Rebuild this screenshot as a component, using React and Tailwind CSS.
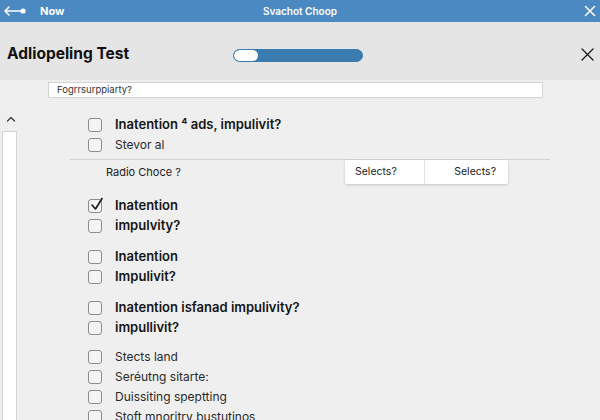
import React from "react";

function Box({ checked }) {
    return (
        <span className="relative w-[14px] h-[14px] rounded-[3px] border border-[#8c8c8c] bg-[#f4f4f4] shrink-0">
            {checked && (
                <svg className="absolute -top-[3px] left-[1px]" width="14" height="14" viewBox="0 0 14 14" fill="none">
                    <path d="M2 8 L5.5 12 L12 1.5" stroke="#1a1a1a" strokeWidth="1.6" strokeLinecap="round" strokeLinejoin="round" />
                </svg>
            )}
        </span>
    );
}

function Row({ label, bold, checked, h = "h-[20px]" }) {
    return (
        <div className={`flex items-center pl-[18px] ${h}`}>
            <Box checked={checked} />
            <span className={bold ? "ml-[13px] text-[13px] font-semibold text-[#151515]" : "ml-[13px] text-[12px] text-[#2a2a2a]"}>
                {label}
            </span>
        </div>
    );
}

export default function App() {
    return (
        <div className="w-[600px] h-[420px] overflow-hidden bg-[#efefef] font-['Inter',sans-serif]">
            {/* top bar */}
            <div className="relative h-[22px] bg-[#4a89c2] flex items-center text-white">
                <svg className="ml-[3px]" width="24" height="12" viewBox="0 0 24 12" fill="none">
                    <path d="M2 6 H20 M6 2 L2 6 L6 10" stroke="white" strokeWidth="1.6" strokeLinecap="round" strokeLinejoin="round" />
                    <circle cx="20" cy="6" r="2.6" fill="white" />
                </svg>
                <span className="ml-[13px] text-[11px] font-bold">Now</span>
                <span className="absolute left-0 right-0 text-center text-[10px] font-semibold pointer-events-none">Svachot Choop</span>
                <svg className="ml-auto mr-[4px]" width="12" height="12" viewBox="0 0 12 12" fill="none">
                    <path d="M1.5 1.5 L10.5 10.5 M10.5 1.5 L1.5 10.5" stroke="white" strokeWidth="1.5" strokeLinecap="round" />
                </svg>
            </div>

            {/* header */}
            <div className="h-[58px] pt-[6px] bg-[#e5e5e5] flex items-center">
                <h1 className="ml-[7px] w-[226px] text-[15.5px] font-bold text-[#111]">Adliopeling Test</h1>
                <div className="mt-[2px] w-[130px] h-[13px] rounded-full border border-[#3a7bb0] bg-[#3a7bb0] overflow-hidden flex">
                    <div className="w-[24px] h-full bg-white rounded-full" />
                </div>
                <svg className="ml-auto mr-[6px]" width="13" height="13" viewBox="0 0 13 13" fill="none">
                    <path d="M1 1 L12 12 M12 1 L1 12" stroke="#1a1a1a" strokeWidth="1.3" strokeLinecap="round" />
                </svg>
            </div>

            {/* body */}
            <div className="pt-[2px]">
                <div className="ml-[48px] w-[495px] h-[16px] bg-white border border-[#d2d2d2] flex items-center pl-[8px] text-[9.5px] text-[#333]">
                    Fogrrsurppiarty?
                </div>

                <div className="flex">
                    <div className="w-[70px] shrink-0 pl-[2px]">
                        <svg className="mt-[17px] ml-[4px]" width="10" height="8" viewBox="0 0 10 8" fill="none">
                            <path d="M1.5 6 L5 2.5 L8.5 6" stroke="#333" strokeWidth="1.2" strokeLinecap="round" strokeLinejoin="round" />
                        </svg>
                        <div className="mt-[8px] w-[15px] h-[300px] bg-white border border-[#d4d4d4]" />
                    </div>

                    <div className="flex-1 pt-[17px]">
                        <Row label="Inatention ⁴ ads, impulivit?" bold />
                        <Row label="Stevor al" />
                        <div className="mt-[4px] w-[480px] h-px bg-[#d3d3d3]" />
                        <div className="relative h-[24px] flex items-center pl-[36px] text-[11px] text-[#222]">
                            Radio Choce ?
                            <div className="absolute left-[275px] top-0 w-[163px] h-[24px] bg-white rounded-[2px] shadow-[0_1px_3px_rgba(0,0,0,0.18)] flex text-[10.5px] text-[#222]">
                                <div className="w-[80px] border-r border-[#e2e2e2] flex items-center pl-[10px]">Selects?</div>
                                <div className="flex-1 flex items-center justify-end pr-[12px]">Selects?</div>
                            </div>
                        </div>

                        <div className="mt-[12px]">
                            <Row label="Inatention" bold checked />
                            <Row label="impulvity?" bold />
                        </div>
                        <div className="mt-[11px]">
                            <Row label="Inatention" bold />
                            <Row label="Impulivit?" bold />
                        </div>
                        <div className="mt-[11px]">
                            <Row label="Inatention isfanad impulivity?" bold />
                            <Row label="impullivit?" bold />
                        </div>
                        <div className="mt-[9px]">
                            <Row label="Stects land" />
                            <Row label="Seréutng sitarte:" />
                            <Row label="Duissiting speptting" />
                            <Row label="Stoft mnoritry bustutinos" />
                        </div>
                    </div>
                </div>
            </div>
        </div>
    );
}
